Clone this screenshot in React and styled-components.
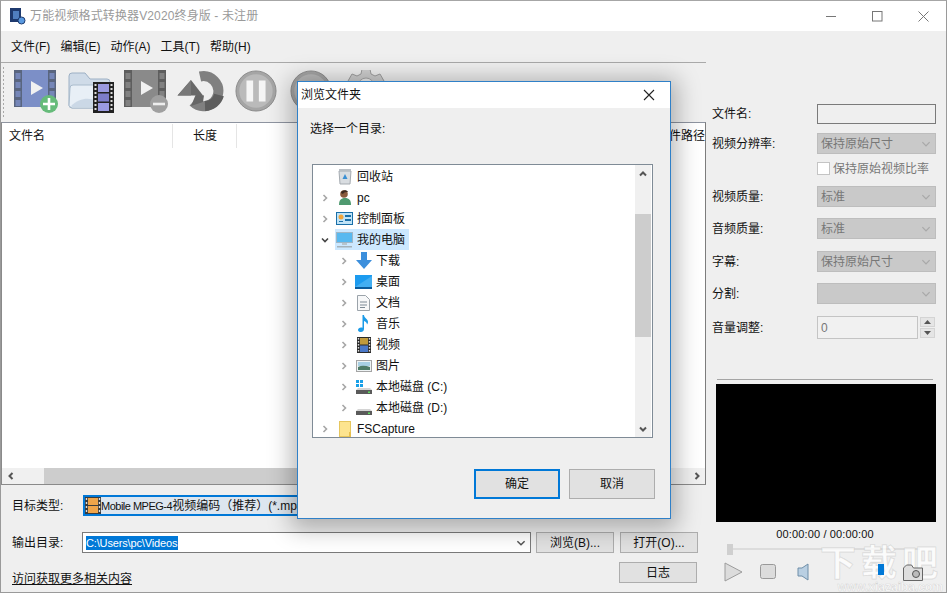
import React from "react";
import styled, { createGlobalStyle } from "styled-components";

const FONT = `"Liberation Sans", "Noto Sans CJK SC", sans-serif`;

const Global = createGlobalStyle`
  html, body { margin: 0; padding: 0; overflow: hidden; background: #efefef; }
  * { box-sizing: border-box; }
`;

const Win = styled.div`
  position: relative; width: 947px; height: 593px; overflow: hidden;
  display: flex; flex-direction: column; background: #efefef;
  font: 12px/16px ${FONT}; color: #111;
  border-top: 1px solid #a6a6a6; border-left: 1px solid #9a9a9a; border-right: 1px solid #9a9a9a; border-bottom: 1px solid #9a9a9a;
`;
const TitleBar = styled.div`
  height: 30px; flex: none; background: #fff; display: flex; align-items: center; padding-left: 9px; color: #9a9a9a;
`;
const TitleText = styled.span` margin-left: 4px; font-size: 12px; letter-spacing: .13px; `;
const WinButtons = styled.div` margin-left: auto; display: flex; `;
const WinButton = styled.div` width: 46px; height: 30px; display: flex; align-items: center; justify-content: center; `;
const Content = styled.div` flex: 1; display: grid; grid-template-columns: 705px 1fr; min-height: 0; `;
const LeftCol = styled.div` display: flex; flex-direction: column; min-width: 0; `;
const MenuBar = styled.div`
  height: 32px; flex: none; display: flex; align-items: center; padding: 1px 0 0 10px; gap: 10.1px; border-bottom: 1px solid #a9a9a9;
`;
const MenuItem = styled.span` white-space: nowrap; `;
const Toolbar = styled.div` height: 59px; flex: none; display: flex; align-items: center; padding: 0 0 3px 7px; position: relative; `;
const Grip = styled.div`
  position: absolute; left: 1px; top: 3px; bottom: 4px; width: 3px;
  background-image: radial-gradient(circle, #a8a8a8 1px, transparent 1px); background-size: 3px 4px;
`;
const ToolSlot = styled.div` width: 55px; height: 50px; display: flex; align-items: center; justify-content: center; flex: none; `;
const FileTable = styled.div`
  flex: 1; min-height: 0; display: flex; flex-direction: column; background: #fff;
  border-top: 1px solid #8e94a0; border-right: 1px solid #7d7d7d; border-left: 1px solid #8a8a8a; border-bottom: 1px solid #8a8a8a;
`;
const Header = styled.div` height: 26px; flex: none; display: flex; align-items: center; `;
const HeadCell = styled.div`
  height: 24px; display: flex; align-items: center; padding-left: ${p => p.$pl}px; width: ${p => p.$w}px; flex: none;
  border-right: ${p => (p.$line ? "1px solid #e5e5e5" : "none")};
`;
const HeadLast = styled.div` margin-left: auto; padding-right: 0; white-space: nowrap; `;
const TableBody = styled.div` flex: 1; `;
const HScroll = styled.div` height: 16px; flex: none; background: #f0f0f0; display: flex; justify-content: space-between; `;
const HThumb = styled.div` width: 620px; background: #cdcdcd; `;
const ScrollBtn = styled.div` width: 17px; background: #f0f0f0; display: flex; align-items: center; justify-content: center; `;
const Form = styled.div` height: 107px; flex: none; padding: 10px 0 0 11px; display: flex; flex-direction: column; `;
const FormRow = styled.div` display: flex; align-items: center; height: 21px; margin-top: ${p => p.$mt || 0}px; `;
const FormLabel = styled.div` width: 71px; flex: none; `;
const TargetCombo = styled.div`
  width: 460px; height: 21px; flex: none; border: 2px solid #0078d7; background: #dde6ef; display: flex; align-items: center; white-space: nowrap; overflow: hidden;
`;
const LatinSmall = styled.span` font-size: 11px; letter-spacing: -.5px; `;
const PathCombo = styled.div`
  width: 449px; height: 21px; flex: none; margin-left: -1px; border: 1px solid #7a7a7a; background: #fff; display: flex; align-items: center; padding-left: 3px;
`;
const SelectedText = styled.span` background: #0078d7; color: #fff; line-height: 14px; font-size: 11px; letter-spacing: -.15px; padding-right: 1px; `;
const ChevronBox = styled.div` margin-left: auto; width: 18px; display: flex; justify-content: center; `;
const Btn = styled.div`
  width: 78px; height: 21px; flex: none; margin-left: ${p => p.$ml || 0}px; background: #e1e1e1; border: 1px solid #adadad;
  display: flex; align-items: center; justify-content: center;
`;
const LogBtn = styled(Btn)` margin-left: auto; margin-right: 9px; `;
const LinkText = styled.span` text-decoration: underline; padding-top: 12px; white-space: nowrap; `;

const RightCol = styled.div` padding: 72px 10px 0 6px; display: flex; flex-direction: column; `;
const FieldRow = styled.div`
  display: flex; align-items: center; height: 21px; margin-top: ${p => p.$mt || 0}px;
`;
const FieldLabel = styled.div` width: 105px; flex: none; `;
const EmptyInput = styled.div` width: 119px; height: 20px; border: 1px solid #7a7a7a; background: #efefef; `;
const Select = styled.div`
  width: 119px; height: 21px; background: #c9c9c9; border: 1px solid #bdbdbd; color: #777; display: flex; align-items: center; padding-left: 3px;
`;
const CheckLine = styled.label` display: flex; align-items: center; gap: 3px; margin-left: 105px; color: #777; `;
const CheckBox = styled.span` width: 13px; height: 13px; background: #fff; border: 1px solid #c4c4c4; display: block; `;
const SpinInput = styled.div`
  width: 101px; height: 23px; border: 1px solid #c4c4c4; background: #f1f1f1; color: #777; display: flex; align-items: center; padding-left: 3px;
`;
const Spin = styled.div` display: flex; flex-direction: column; gap: 1px; margin-left: 2px; `;
const SpinBtn = styled.div` width: 15px; height: 10px; background: #e5e5e5; border: 1px solid #d4d4d4; display: flex; align-items: center; justify-content: center; `;
const Divider = styled.div` height: 1px; margin: 41px 3px 0 5px; background: #a5a5a5; `;
const Video = styled.div` height: 138px; margin: 4px 0 0 4px; background: #000; `;
const TimeText = styled.div` text-align: center; margin-top: 4px; height: 16px; padding-left: 2px; font-size: 11px; letter-spacing: .15px; `;
const Track = styled.div`
  height: 8px; margin: 3px 16px 0 15px; position: relative; display: flex; align-items: center;
  &::after { content: ""; display: block; height: 2px; width: 100%; background: #dcdcdc; }
`;
const Knob = styled.div` position: absolute; left: 0; top: -1px; width: 6px; height: 11px; background: #cfcfcf; `;
const Controls = styled.div` display: flex; align-items: center; margin: 9px 0 0 12px; height: 20px; position: relative; z-index: 1; `;
const ControlSlot = styled.div` width: ${p => p.$w}px; flex: none; display: flex; align-items: center; `;
const VolumeKnob = styled.div` width: 6px; height: 11px; background: #0078d7; flex: none; margin-top: -5px; `;

const Dialog = styled.div`
  position: absolute; left: 296px; top: 80px; width: 374px; height: 438px; background: #efefef; border: 1px solid #2f80c8;
  box-shadow: 0 4px 22px 6px rgba(0,0,0,.28); display: flex; flex-direction: column; z-index: 3;
`;
const DlgTitle = styled.div` height: 26px; flex: none; background: #fff; display: flex; align-items: center; padding-left: 3px; `;
const DlgClose = styled.div` margin-left: auto; width: 44px; display: flex; justify-content: center; padding-left: 2px; `;
const DlgPrompt = styled.div` padding: 13px 0 0 12px; height: 56px; flex: none; `;
const Tree = styled.div`
  margin-left: 14px; width: 341px; height: 274px; flex: none; background: #fff; border: 1px solid #7f8b96; display: flex; overflow: hidden;
`;
const TreeList = styled.div` flex: 1; padding-top: 1px; min-width: 0; `;
const TreeRow = styled.div` height: 21px; display: flex; align-items: center; padding-left: ${p => p.$level * 19 + 7}px; `;
const Arrow = styled.div` width: 10px; height: 10px; flex: none; display: flex; align-items: center; justify-content: center; `;
const TreeItem = styled.div`
  display: flex; align-items: center; height: 21px; margin-left: 5px; padding: 0 4px 0 0; background: ${p => (p.$sel ? "#cce8ff" : "transparent")};
`;
const TreeIcon = styled.div` width: 19px; height: 18px; flex: none; display: flex; align-items: center; justify-content: center; margin-right: 3px; `;
const VScroll = styled.div` width: 16px; margin-right: 1px; flex: none; background: #f0f0f0; display: flex; flex-direction: column; `;
const VArrow = styled.div` height: 17px; display: flex; align-items: center; justify-content: center; flex: none; `;
const VTrack = styled.div` flex: 1; padding-top: 32px; `;
const VThumb = styled.div` height: 123px; background: #cdcdcd; `;
const DlgFoot = styled.div` display: flex; margin: 31px 0 0 176px; gap: 9px; `;
const DlgBtn = styled.div`
  width: 86px; height: 30px; background: #e1e1e1; display: flex; align-items: center; justify-content: center;
  border: ${p => (p.$primary ? "2px solid #0078d7" : "1px solid #adadad")};
`;

const Watermark = styled.div`
  position: absolute; right: 3px; bottom: -1px; width: 128px; z-index: 0; pointer-events: none;
  color: rgba(255,255,255,.75); -webkit-text-stroke: 1px rgba(140,140,140,.22); text-align: right;
`;
const WmBig = styled.div` font: bold 36px/36px ${FONT}; letter-spacing: 5px; `;
const WmSmall = styled.div` font: bold 12px/11px ${FONT}; -webkit-text-stroke: .6px rgba(140,140,140,.28); `;

const Chevron = ({ dir = "down", c = "#555", s = 10, w = 1.5 }) => {
  const d = { down: "M2 3.500 5 6.500 8 3.500", up: "M2 6.500 5 3.500 8 6.500", left: "M6.500 2 3.500 5 6.500 8", right: "M3.500 2 6.500 5 3.500 8" }[dir];
  return <svg width={s} height={s} viewBox="0 0 10 10"><path d={d} fill="none" stroke={c} strokeWidth={w} /></svg>;
};

const FilmBase = ({ main, side }) => (
  <>
    <rect x="1" y="2" width="42" height="37" fill={side} />
    <rect x="9" y="2" width="26" height="37" fill={main} />
    {[5, 14, 23, 32].map(y => (
      <g key={y}>
        <rect x="2.500" y={y} width="5" height="6" fill={main} opacity=".8" />
        <rect x="36.500" y={y} width="5" height="6" fill={main} opacity=".8" />
      </g>
    ))}
    <path d="M18 13v14l12-7z" fill="#f1f1f1" />
  </>
);
const IconAdd = () => (
  <svg width="46" height="46" viewBox="0 0 46 46">
    <FilmBase main="#7c8fc7" side="#59657f" />
    <circle cx="36" cy="36" r="9" fill="#66bb7a" />
    <path d="M36 30v12M30 36h12" stroke="#fff" strokeWidth="2.600" />
  </svg>
);
const IconRemove = () => (
  <svg width="46" height="46" viewBox="0 0 46 46">
    <FilmBase main="#8a8a8a" side="#5e5e5e" />
    <circle cx="36" cy="36" r="9" fill="#a0a0a0" />
    <path d="M30 36h12" stroke="#eee" strokeWidth="2.600" />
  </svg>
);
const IconFolder = () => (
  <svg width="48" height="46" viewBox="0 0 48 46">
    <path d="M2 8a3 3 0 0 1 3-3h13l5 6h17a3 3 0 0 1 3 3v26H5a3 3 0 0 1-3-3z" fill="#cfdbe8" stroke="#9db0c4" />
    <path d="M2 38 3 20a3 3 0 0 1 3-3h36v23H5z" fill="#e8eff6" stroke="#aabccd" />
    <path d="M4 38c8-8 18-9 26-5v6H5z" fill="#cbd8e6" />
    <rect x="26" y="14" width="21" height="31" fill="#222" />
    <rect x="31" y="16" width="11" height="8" fill="#9a9ae0" />
    <rect x="31" y="25.500" width="11" height="8" fill="#7d7dc9" />
    <rect x="31" y="35" width="11" height="8" fill="#9a9ae0" />
    {[16, 20, 24, 28, 32, 36, 40].map(y => (
      <g key={y}><rect x="27.500" y={y} width="2" height="2" fill="#ddd" /><rect x="43.500" y={y} width="2" height="2" fill="#ddd" /></g>
    ))}
  </svg>
);
const IconUndo = () => (
  <svg width="48" height="46" viewBox="0 0 48 46">
    <path d="M23 8.500A15 15 0 1 1 16 34" fill="none" stroke="#808080" strokeWidth="10" />
    <path d="M42 27A15 15 0 0 1 28 38" fill="none" stroke="#5e5e5e" strokeWidth="10" />
    <path d="M19 26 14 38 26 34 27 27.500Z" fill="#666" />
    <path d="M.500 27.500 14 12 26 27.500Z" fill="#686868" />
    <path d="M.500 27.500 14 12 14 27.500Z" fill="#787878" />
  </svg>
);
const IconPause = () => (
  <svg width="42" height="42" viewBox="0 0 44 44">
    <circle cx="22" cy="22" r="21" fill="#a5a5a5" stroke="#8a8a8a" />
    <circle cx="22" cy="22" r="17.500" fill="#bababa" />
    <rect x="12" y="11" width="7" height="22" fill="#f5f5f5" />
    <rect x="25" y="11" width="7" height="22" fill="#f5f5f5" />
  </svg>
);
const IconStop = () => (
  <svg width="42" height="42" viewBox="0 0 44 44">
    <circle cx="22" cy="22" r="21" fill="#a5a5a5" stroke="#8a8a8a" />
    <circle cx="22" cy="22" r="17.500" fill="#bababa" />
  </svg>
);
const IconGear = () => (
  <svg width="42" height="42" viewBox="0 5 42 42">
    <path d="M17 4h8l1 5 4 2 5-2 4 7-4 3v4l4 3-4 7-5-2-4 2-1 5h-8l-1-5-4-2-5 2-4-7 4-3v-4l-4-3 4-7 5 2 4-2z" fill="#cfcfcf" stroke="#9f9f9f" />
    <circle cx="21" cy="21" r="8" fill="#efefef" stroke="#a9a9a9" />
  </svg>
);

const Recycle = () => (
  <svg width="14" height="17" viewBox="0 0 14 17">
    <path d="M1 3h12l-1 13H2z" fill="#d9dde1" stroke="#a5abb1" />
    <rect x="1" y="1" width="12" height="2" fill="#b9bfc5" />
    <path d="M7 6 9.500 11h-5z" fill="#3a8fd3" />
  </svg>
);
const User = () => (
  <svg width="14" height="17" viewBox="0 0 14 17">
    <path d="M1 16c0-5 2-7 6-7s6 2 6 7z" fill="#4f9a70" />
    <circle cx="6" cy="5" r="3.800" fill="#8a5a3c" />
    <path d="M3 4c0-3 6-4 7-1-2 0-4 0-5 2z" fill="#3c2a20" />
  </svg>
);
const ControlPanel = () => (
  <svg width="17" height="13" viewBox="0 0 17 13">
    <rect x=".5" y=".5" width="16" height="12" fill="#bfe3f7" stroke="#1a6fa8" />
    <circle cx="5" cy="5" r="2.500" fill="#f2a53a" />
    <rect x="9" y="3" width="6" height="2" fill="#1a6fa8" />
    <rect x="9" y="7" width="6" height="2" fill="#1a6fa8" />
    <rect x="3" y="9" width="4" height="1" fill="#1a6fa8" />
  </svg>
);
const Monitor = () => (
  <svg width="17" height="16" viewBox="0 0 17 16">
    <rect x=".5" y=".5" width="16" height="10" fill="#58b9f0" stroke="#9fb6c6" />
    <rect x="6" y="11" width="5" height="2" fill="#b8c4cc" />
    <rect x="1" y="14" width="15" height="1.500" fill="#a5b2ba" />
  </svg>
);
const Download = () => (
  <svg width="16" height="17" viewBox="0 0 16 17">
    <path d="M5 0h6v8h5l-8 9-8-9h5z" fill="#3c8fdc" />
  </svg>
);
const Desktop = () => (
  <svg width="17" height="14" viewBox="0 0 17 14">
    <rect width="17" height="12" fill="#1c9bef" />
    <path d="M0 12 17 1v11z" fill="#42aef2" />
    <rect y="12" width="17" height="2" fill="#0a5b9c" />
  </svg>
);
const Doc = () => (
  <svg width="13" height="16" viewBox="0 0 13 16">
    <path d="M.5.500h8l4 4v11H.5z" fill="#f7f8f9" stroke="#9ba3aa" />
    <path d="M3 7h7M3 10h7M3 12.500h5" stroke="#7c8a96" />
  </svg>
);
const Music = () => (
  <svg width="11" height="17" viewBox="0 0 11 17">
    <path d="M4.500 0H6c0 3 4 4 4 7 0 1-.5 2-1 2.500 0-2-1.500-3-3-3.500v8c0 2-1.500 3-3 3s-3-.5-3-2 1.500-2.500 3-2.500c.5 0 1 0 1.500.2z" fill="#1b9be8" />
  </svg>
);
const Video2 = () => (
  <svg width="14" height="16" viewBox="0 0 14 16">
    <rect width="14" height="16" fill="#2a2a2a" />
    <rect x="3" y="1" width="8" height="6.500" fill="#c09a3c" />
    <rect x="3" y="8.500" width="8" height="6.500" fill="#4a78c8" />
    {[1, 4, 7, 10, 13].map(y => (
      <g key={y}><rect x=".8" y={y} width="1.400" height="1.600" fill="#ddd" /><rect x="11.800" y={y} width="1.400" height="1.600" fill="#ddd" /></g>
    ))}
  </svg>
);
const Picture = () => (
  <svg width="16" height="12" viewBox="0 0 16 12">
    <rect x=".5" y=".5" width="15" height="11" fill="#eef3f4" stroke="#a4a4a4" />
    <rect x="2" y="2" width="12" height="4" fill="#a8d0e4" />
    <path d="M2 7c4-2 8-1 12 0v3H2z" fill="#4e7c68" />
  </svg>
);
const Disk = ({ win }) => (
  <svg width="16" height="14" viewBox="0 0 16 14">
    {win && <g fill="#19a0e8"><rect x="0" y="0" width="3" height="3" /><rect x="4" y="0" width="3" height="3" /><rect x="0" y="4" width="3" height="3" /><rect x="4" y="4" width="3" height="3" /></g>}
    <path d="M2 8h12l2 2H0z" fill="#d4d4d4" />
    <rect y="10" width="16" height="4" fill="#5a5a5a" />
    <rect x="12" y="11.500" width="2" height="1.500" fill="#5fe05f" />
  </svg>
);
const Folder = () => (
  <svg width="12" height="16" viewBox="0 0 12 16">
    <rect x=".5" y=".5" width="11" height="15" fill="#fde48f" stroke="#e6c65e" />
    <rect x="10" y="11" width="2" height="5" fill="#e8c04e" />
  </svg>
);

const treeRows = [
  { level: 0, icon: <Recycle />, text: "回收站", noArrow: true },
  { level: 0, icon: <User />, text: "pc" },
  { level: 0, icon: <ControlPanel />, text: "控制面板" },
  { level: 0, icon: <Monitor />, text: "我的电脑", open: true, sel: true },
  { level: 1, icon: <Download />, text: "下载" },
  { level: 1, icon: <Desktop />, text: "桌面" },
  { level: 1, icon: <Doc />, text: "文档" },
  { level: 1, icon: <Music />, text: "音乐" },
  { level: 1, icon: <Video2 />, text: "视频" },
  { level: 1, icon: <Picture />, text: "图片" },
  { level: 1, icon: <Disk win />, text: "本地磁盘 (C:)" },
  { level: 1, icon: <Disk />, text: "本地磁盘 (D:)" },
  { level: 0, icon: <Folder />, text: "FSCapture" },
];

const settings = [
  { label: "视频质量:", value: "标准", mt: 7 },
  { label: "音频质量:", value: "标准", mt: 11 },
  { label: "字幕:", value: "保持原始尺寸", mt: 12 },
  { label: "分割:", value: "", mt: 11 },
];

const SelectChevron = () => <ChevronBox><Chevron c="#a8a8a8" s={12} w={1} /></ChevronBox>;

export default function App() {
  return (
    <Win>
      <Global />
      <TitleBar>
        <svg width="16" height="18" viewBox="0 0 16 18">
          <rect x="0" y="1" width="11" height="14" fill="#1e3a6e" />
          <rect x="3" y="4" width="6" height="8" fill="#4f7fc0" />
          <circle cx="11.500" cy="13.500" r="3.500" fill="#5a9ae0" stroke="#1e3a6e" />
        </svg>
        <TitleText>万能视频格式转换器V2020终身版 - 未注册</TitleText>
        <WinButtons>
          <WinButton><svg width="11" height="11"><path d="M0 5.500h10" stroke="#777" /></svg></WinButton>
          <WinButton><svg width="11" height="11"><rect x=".5" y=".5" width="9.500" height="9.500" fill="none" stroke="#777" /></svg></WinButton>
          <WinButton><svg width="11" height="11"><path d="M.5.500l10 10M10.500.500l-10 10" stroke="#777" /></svg></WinButton>
        </WinButtons>
      </TitleBar>
      <Content>
        <LeftCol>
          <MenuBar>
            <MenuItem>文件(F)</MenuItem>
            <MenuItem>编辑(E)</MenuItem>
            <MenuItem>动作(A)</MenuItem>
            <MenuItem>工具(T)</MenuItem>
            <MenuItem>帮助(H)</MenuItem>
          </MenuBar>
          <Toolbar>
            <Grip />
            <ToolSlot><IconAdd /></ToolSlot>
            <ToolSlot><IconFolder /></ToolSlot>
            <ToolSlot><IconRemove /></ToolSlot>
            <ToolSlot><IconUndo /></ToolSlot>
            <ToolSlot><IconPause /></ToolSlot>
            <ToolSlot><IconStop /></ToolSlot>
            <ToolSlot><IconGear /></ToolSlot>
          </Toolbar>
          <FileTable>
            <Header>
              <HeadCell $w={171} $pl={7} $line>文件名</HeadCell>
              <HeadCell $w={64} $pl={20} $line>长度</HeadCell>
              <HeadLast>文件路径</HeadLast>
            </Header>
            <TableBody />
            <HScroll>
              <ScrollBtn><Chevron dir="left" w={2} /></ScrollBtn>
              <HThumb />
              <ScrollBtn><Chevron dir="right" w={2} /></ScrollBtn>
            </HScroll>
          </FileTable>
          <Form>
            <FormRow>
              <FormLabel>目标类型:</FormLabel>
              <TargetCombo>
                <svg width="16" height="17" viewBox="0 0 16 17">
                  <rect width="16" height="17" fill="#3b3b3b" />
                  <rect x="3" y="1" width="10" height="7" fill="#f0a54a" />
                  <rect x="3" y="9" width="10" height="7" fill="#f0a54a" />
                  {[1, 5, 9, 13].map(y => (
                    <g key={y}><rect x=".8" y={y} width="1.400" height="2" fill="#ddd" /><rect x="13.800" y={y} width="1.400" height="2" fill="#ddd" /></g>
                  ))}
                </svg>
                <LatinSmall>Mobile MPEG-4</LatinSmall>视频编码（推荐）(*.mp4)
              </TargetCombo>
            </FormRow>
            <FormRow $mt={16}>
              <FormLabel>输出目录:</FormLabel>
              <PathCombo>
                <SelectedText>C:\Users\pc\Videos</SelectedText>
                <ChevronBox><Chevron c="#555" s={12} w={1.200} /></ChevronBox>
              </PathCombo>
              <Btn $ml={5}>浏览(B)...</Btn>
              <Btn $ml={6}>打开(O)...</Btn>
            </FormRow>
            <FormRow $mt={9}>
              <LinkText>访问获取更多相关内容</LinkText>
              <LogBtn>日志</LogBtn>
            </FormRow>
          </Form>
        </LeftCol>
        <RightCol>
          <FieldRow>
            <FieldLabel>文件名:</FieldLabel>
            <EmptyInput />
          </FieldRow>
          <FieldRow $mt={9}>
            <FieldLabel>视频分辨率:</FieldLabel>
            <Select>保持原始尺寸<SelectChevron /></Select>
          </FieldRow>
          <FieldRow $mt={4}>
            <CheckLine><CheckBox />保持原始视频比率</CheckLine>
          </FieldRow>
          {settings.map(s => (
            <FieldRow key={s.label} $mt={s.mt}>
              <FieldLabel>{s.label}</FieldLabel>
              <Select>{s.value}<SelectChevron /></Select>
            </FieldRow>
          ))}
          <FieldRow $mt={13}>
            <FieldLabel>音量调整:</FieldLabel>
            <SpinInput>0</SpinInput>
            <Spin>
              <SpinBtn><svg width="7" height="4"><path d="M3.500 0 7 4H0z" fill="#555" /></svg></SpinBtn>
              <SpinBtn><svg width="7" height="4"><path d="M0 0h7L3.500 4z" fill="#555" /></svg></SpinBtn>
            </Spin>
          </FieldRow>
          <Divider />
          <Video />
          <TimeText>00:00:00 / 00:00:00</TimeText>
          <Track><Knob /></Track>
          <Controls>
            <ControlSlot $w={36}>
              <svg width="19" height="20" viewBox="0 0 19 20"><path d="M1 1v18L18 10z" fill="#dcdcdc" stroke="#9c9c9c" /></svg>
            </ControlSlot>
            <ControlSlot $w={37}>
              <svg width="16" height="16" viewBox="0 0 16 16"><rect x=".5" y=".5" width="15" height="14" rx="2" fill="#dcdcdc" stroke="#999" /></svg>
            </ControlSlot>
            <ControlSlot $w={81}>
              <svg width="12" height="18" viewBox="0 0 12 18"><path d="M11 1v16L5 13H1V5h4z" fill="#b9cfe2" stroke="#6f8ea8" /></svg>
            </ControlSlot>
            <VolumeKnob />
            <ControlSlot $w={19} />
            <svg width="20" height="17" viewBox="0 0 20 17">
              <path d="M.5 16.500V4l3-3h5l2 3h9v12.500z" fill="#dedede" stroke="#666" />
              <circle cx="13" cy="10" r="3.500" fill="#bbb" stroke="#555" />
            </svg>
          </Controls>
        </RightCol>
      </Content>

      <Watermark>
        <WmBig>下载吧</WmBig>
        <WmSmall>www.xiazaiba.com</WmSmall>
      </Watermark>

      <Dialog>
        <DlgTitle>
          浏览文件夹
          <DlgClose>
            <svg width="12" height="12"><path d="M1 1l10 10M11 1 1 11" stroke="#222" strokeWidth="1.100" /></svg>
          </DlgClose>
        </DlgTitle>
        <DlgPrompt>选择一个目录:</DlgPrompt>
        <Tree>
          <TreeList>
            {treeRows.map(r => (
              <TreeRow key={r.text} $level={r.level}>
                <Arrow>{!r.noArrow && <Chevron dir={r.open ? "down" : "right"} c={r.open ? "#444" : "#a6a6a6"} s={12} w={1.600} />}</Arrow>
                <TreeItem $sel={r.sel}>
                  <TreeIcon>{r.icon}</TreeIcon>
                  {r.text}
                </TreeItem>
              </TreeRow>
            ))}
          </TreeList>
          <VScroll>
            <VArrow><Chevron dir="up" w={2} /></VArrow>
            <VTrack><VThumb /></VTrack>
            <VArrow><Chevron w={2} /></VArrow>
          </VScroll>
        </Tree>
        <DlgFoot>
          <DlgBtn $primary>确定</DlgBtn>
          <DlgBtn>取消</DlgBtn>
        </DlgFoot>
      </Dialog>
    </Win>
  );
}
